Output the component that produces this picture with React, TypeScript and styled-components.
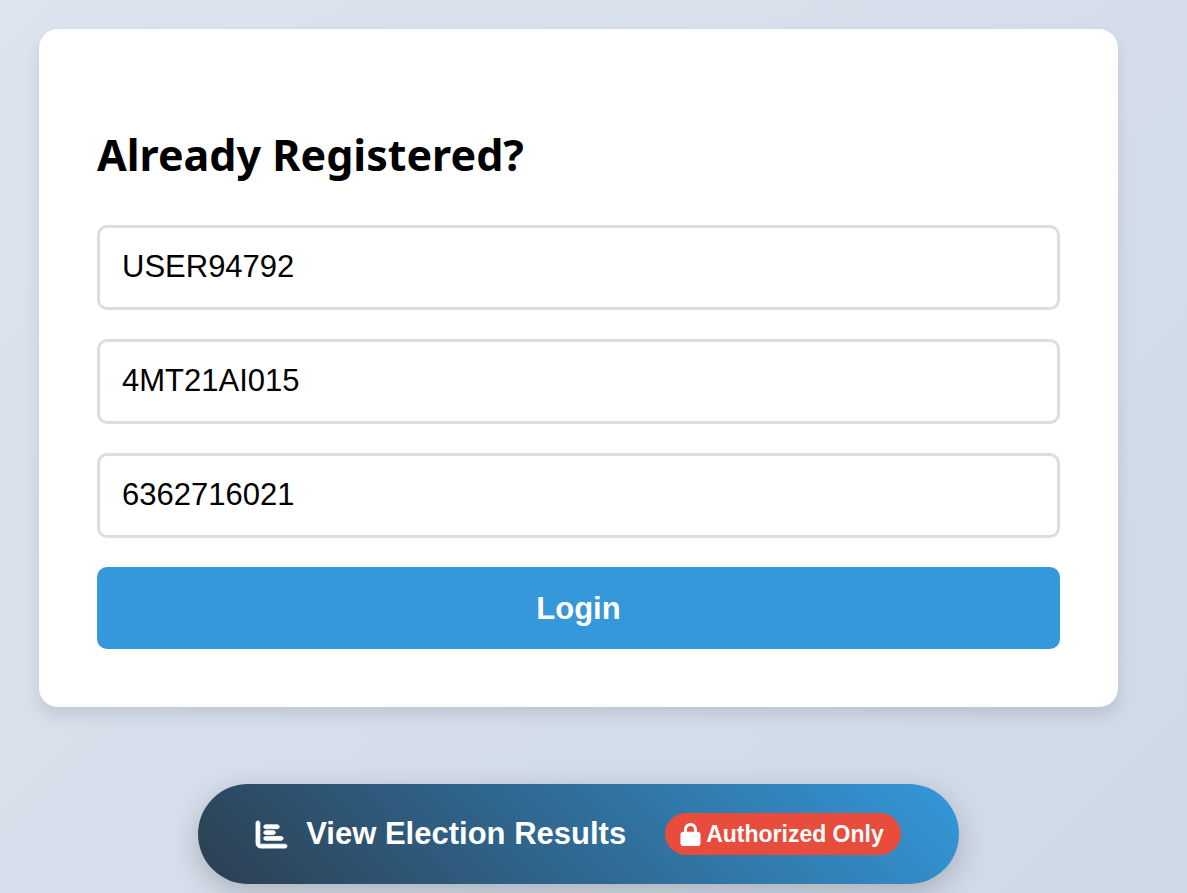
import React from "react";
import styled, { createGlobalStyle } from "styled-components";
import { FaChartBar, FaLock } from "react-icons/fa6";

const GlobalStyle = createGlobalStyle`
  *, *::before, *::after { box-sizing: border-box; }
  body {
    margin: 0;
    font-family: "Noto Sans", "Open Sans", sans-serif;
    color: #000;
  }
`;

const Page = styled.main`
  display: flex;
  flex-direction: column;
  gap: 77px;
  min-height: 100vh;
  padding: 29px 69px 9px 39px;
  background: linear-gradient(135deg, #dde3ef 0%, #d5deea 50%, #cfd8e7 100%);
`;

const Card = styled.section`
  padding: 96px 58px 58px;
  border-radius: 19px;
  background: #fff;
  box-shadow: 0 8px 16px rgba(0, 0, 0, 0.1);
`;

const Title = styled.h2`
  margin: 0 0 40px;
  font-size: 43px;
  line-height: 60px;
  font-weight: 700;
`;

const Form = styled.form`
  display: flex;
  flex-direction: column;
  gap: 29px;
`;

const Field = styled.input`
  width: 100%;
  height: 85px;
  padding: 0 22px 2px;
  border: 3px solid #ddd;
  border-radius: 10px;
  background: #fff;
  color: #000;
  font-family: "Liberation Sans", Arial, sans-serif;
  font-size: 31px;
`;

const LoginButton = styled.button`
  height: 82px;
  padding: 2px 0 0;
  border: 0;
  border-radius: 10px;
  background: #3498db;
  color: #fff;
  font-family: "Liberation Sans", Arial, sans-serif;
  font-size: 31px;
  font-weight: 700;
  cursor: pointer;
`;

const ResultsLink = styled.a`
  display: flex;
  align-items: center;
  align-self: center;
  min-height: 100px;
  padding: 0 58px;
  border-radius: 50px;
  background: linear-gradient(45deg, #2c3e50, #3498db);
  box-shadow: 0 8px 29px rgba(0, 0, 0, 0.2);
  color: #fff;
  font-family: "Liberation Sans", Arial, sans-serif;
  font-size: 31px;
  font-weight: 700;
  text-decoration: none;
  white-space: nowrap;
`;

const ChartIcon = styled(FaChartBar)`
  overflow: visible;

  path {
    stroke: currentColor;
    stroke-width: 14;
  }
`;

const ResultsLabel = styled.span`
  margin: 0 39px 0 19px;
`;

const Badge = styled.span`
  display: flex;
  align-items: center;
  gap: 4px;
  padding: 8px 17px 8px 14px;
  border-radius: 21px;
  background: #e74c3c;
  font-size: 23px;
  line-height: 26px;
`;

const fields = [
  { name: "userId", label: "User ID", value: "USER94792" },
  { name: "usn", label: "Registration number", value: "4MT21AI015" },
  { name: "phone", label: "Phone number", value: "6362716021" },
];

export default function App() {
  return (
    <>
      <GlobalStyle />
      <Page>
        <Card>
          <Title>Already Registered?</Title>
          <Form onSubmit={(event) => event.preventDefault()}>
            {fields.map(({ name, label, value }) => (
              <Field key={name} type="text" name={name} aria-label={label} defaultValue={value} />
            ))}
            <LoginButton type="submit">Login</LoginButton>
          </Form>
        </Card>
        <ResultsLink href="#results">
          <ChartIcon size={31} aria-hidden="true" />
          <ResultsLabel>View Election Results</ResultsLabel>
          <Badge>
            <FaLock size={23} aria-hidden="true" />
            Authorized Only
          </Badge>
        </ResultsLink>
      </Page>
    </>
  );
}
